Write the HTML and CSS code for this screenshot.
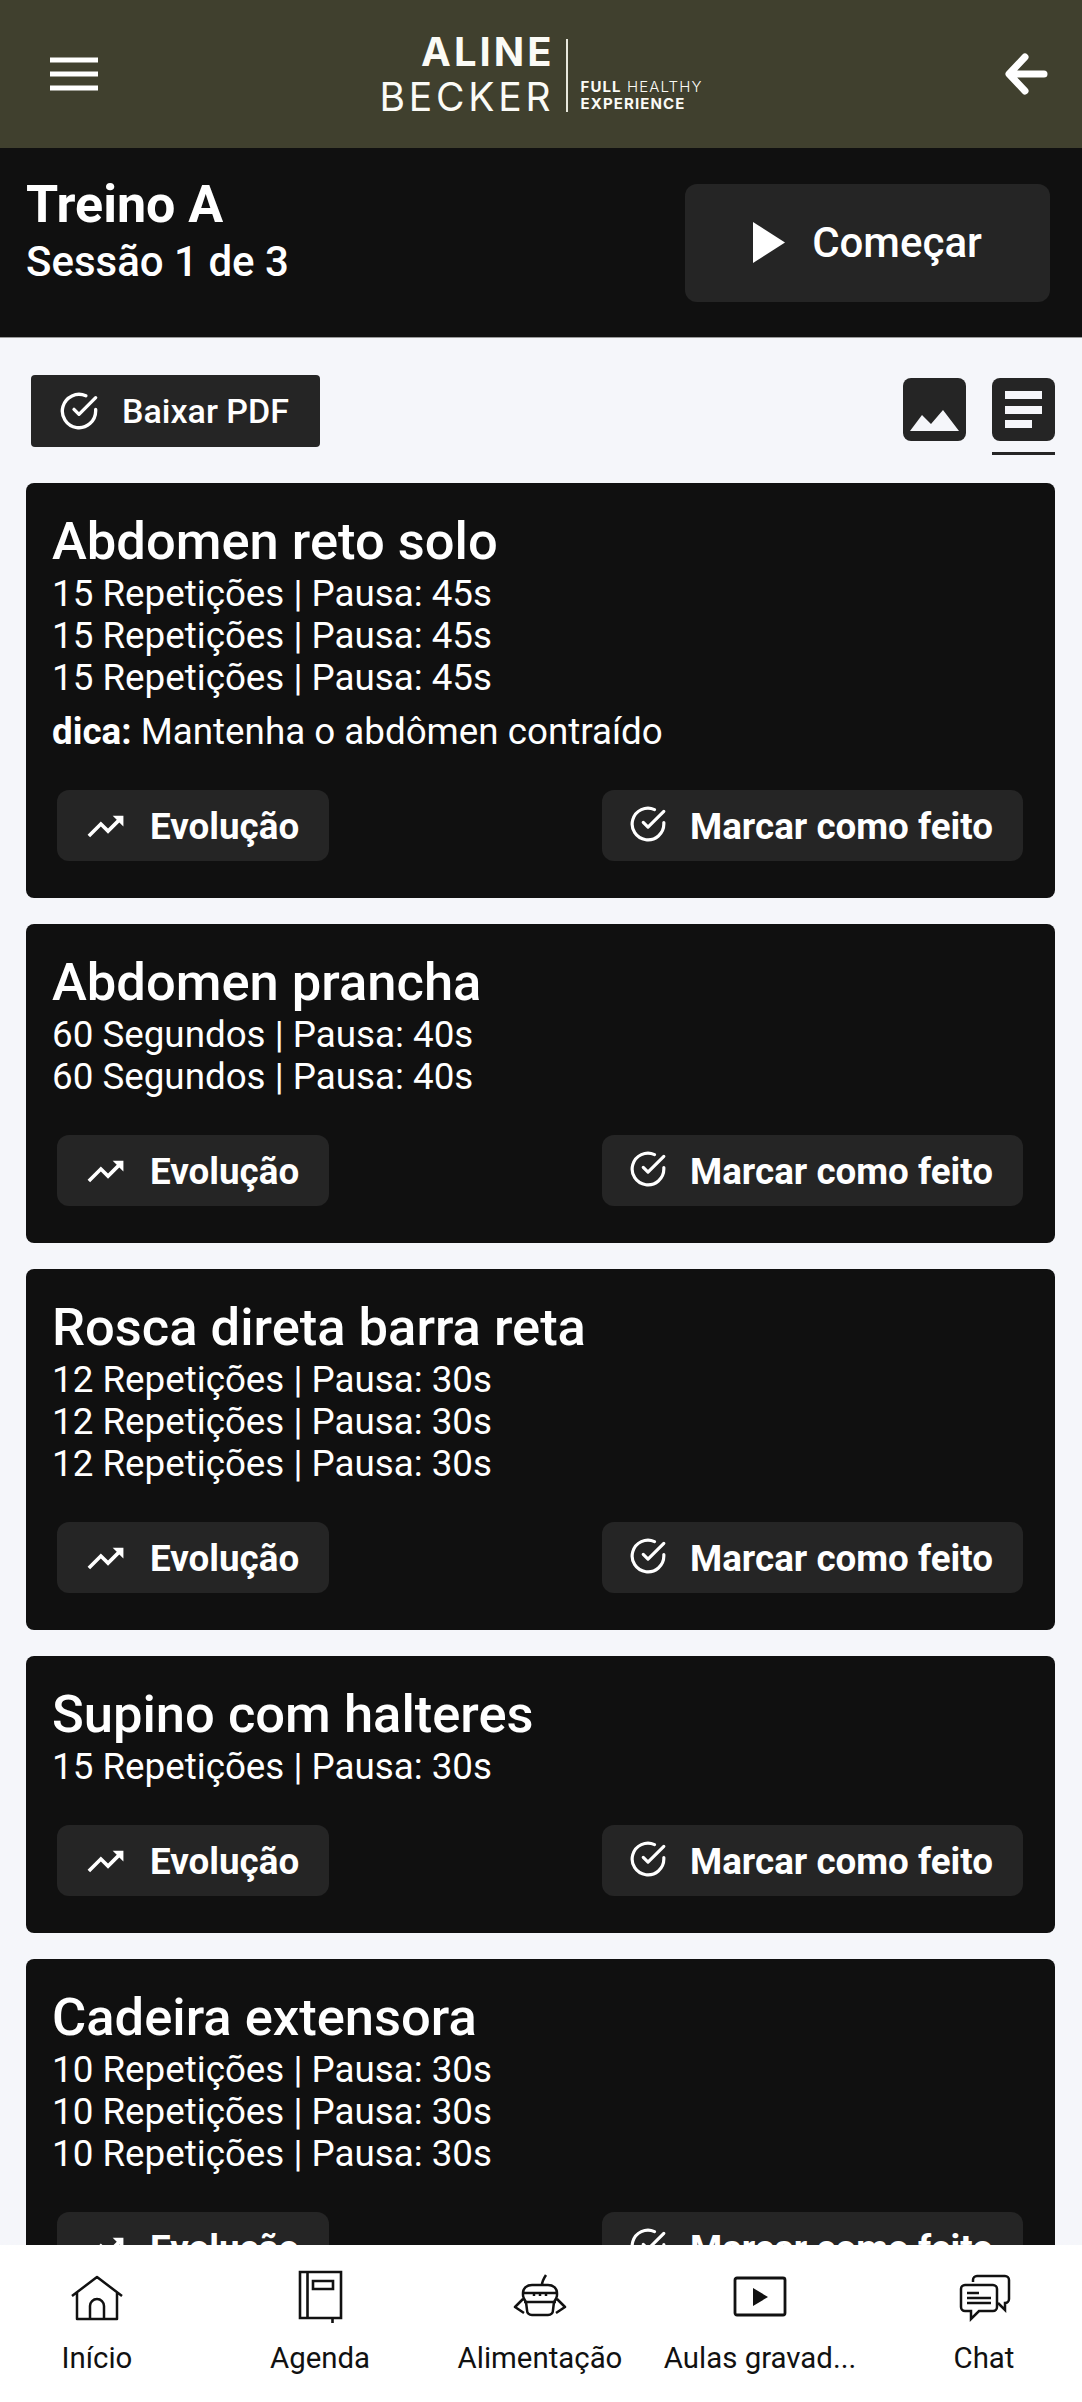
FILE: index.html
```html
<!DOCTYPE html>
<html lang="pt">
<head>
<meta charset="utf-8">
<title>Treino A</title>
<link rel="stylesheet" href="styles.css">
</head>
<body>
<svg class="defs" width="0" height="0">
  <symbol id="check" viewBox="0 0 24 24"><path d="M22 11.1V12a10 10 0 1 1-5.9-9.1" fill="none" stroke="currentColor" stroke-width="2" stroke-linecap="round"/><path d="M22 4 12 14.010l-3-3" fill="none" stroke="currentColor" stroke-width="2" stroke-linecap="round" stroke-linejoin="round"/></symbol>
  <symbol id="trend" viewBox="0 0 24 24"><path d="M16 6l2.290 2.290-4.880 4.880-4-4L2 16.590 3.410 18l6-6 4 4 6.300-6.290L22 12V6z" fill="currentColor"/></symbol>
</svg>
<div class="app">
  <header class="topbar">
    <svg class="menu" viewBox="0 0 48 34"><path d="M0 3h48M0 17h48M0 31h48" stroke="#fff" stroke-width="5"/></svg>
    <div class="logo">
      <div class="logo-name"><span class="logo-aline">ALINE</span><span class="logo-becker">BECKER</span></div>
      <div class="logo-rule"></div>
      <div class="logo-tag"><span><b>FULL</b> HEALTHY</span><b>EXPERIENCE</b></div>
    </div>
    <svg class="back" viewBox="0 0 44 42"><path d="M21 4 5 21l16 17M7 21h33" fill="none" stroke="#fff" stroke-width="7" stroke-linecap="round" stroke-linejoin="round"/></svg>
  </header>
  <section class="session">
    <div class="session-text">
      <h1 class="session-title">Treino A</h1>
      <p class="session-sub">Sessão 1 de 3</p>
    </div>
    <button class="start"><svg class="play" viewBox="0 0 32 41"><path d="M0 0l32 20.500L0 41z" fill="#fff"/></svg>Começar</button>
  </section>
  <main class="content">
    <div class="tools">
      <button class="pdf"><svg class="ic-check pdf-ic"><use href="#check"/></svg>Baixar PDF</button>
      <div class="views">
        <div class="view">
          <svg class="view-ic" viewBox="0 0 63 63"><rect width="63" height="63" rx="8" fill="#252525"/><path d="M7 53 19 37l9 9 12-14 16 21z" fill="#f5f6fa"/></svg>
        </div>
        <div class="view active">
          <svg class="view-ic" viewBox="0 0 63 63"><rect width="63" height="63" rx="8" fill="#252525"/><path d="M13 13h37v8H13zM13 28h37v8H13zM13 42h27v8H13z" fill="#f5f6fa"/></svg>
        </div>
      </div>
    </div>

    <article class="card">
      <h2>Abdomen reto solo</h2>
      <p>15 Repetições | Pausa: 45s</p>
      <p>15 Repetições | Pausa: 45s</p>
      <p>15 Repetições | Pausa: 45s</p>
      <p class="tip"><b>dica:</b> Mantenha o abdômen contraído</p>
      <div class="actions">
        <button class="act"><svg class="ic-trend"><use href="#trend"/></svg>Evolução</button>
        <button class="act"><svg class="ic-check big"><use href="#check"/></svg>Marcar como feito</button>
      </div>
    </article>

    <article class="card">
      <h2>Abdomen prancha</h2>
      <p>60 Segundos | Pausa: 40s</p>
      <p>60 Segundos | Pausa: 40s</p>
      <div class="actions">
        <button class="act"><svg class="ic-trend"><use href="#trend"/></svg>Evolução</button>
        <button class="act"><svg class="ic-check big"><use href="#check"/></svg>Marcar como feito</button>
      </div>
    </article>

    <article class="card">
      <h2>Rosca direta barra reta</h2>
      <p>12 Repetições | Pausa: 30s</p>
      <p>12 Repetições | Pausa: 30s</p>
      <p>12 Repetições | Pausa: 30s</p>
      <div class="actions">
        <button class="act"><svg class="ic-trend"><use href="#trend"/></svg>Evolução</button>
        <button class="act"><svg class="ic-check big"><use href="#check"/></svg>Marcar como feito</button>
      </div>
    </article>

    <article class="card">
      <h2>Supino com halteres</h2>
      <p>15 Repetições | Pausa: 30s</p>
      <div class="actions">
        <button class="act"><svg class="ic-trend"><use href="#trend"/></svg>Evolução</button>
        <button class="act"><svg class="ic-check big"><use href="#check"/></svg>Marcar como feito</button>
      </div>
    </article>

    <article class="card">
      <h2>Cadeira extensora</h2>
      <p>10 Repetições | Pausa: 30s</p>
      <p>10 Repetições | Pausa: 30s</p>
      <p>10 Repetições | Pausa: 30s</p>
      <div class="actions">
        <button class="act"><svg class="ic-trend"><use href="#trend"/></svg>Evolução</button>
        <button class="act"><svg class="ic-check big"><use href="#check"/></svg>Marcar como feito</button>
      </div>
    </article>
  </main>
  <nav class="tabs">
    <div class="tab">
      <svg class="tab-ic" viewBox="0 0 56 56"><path d="M3 27 28 8l25 19M8 23v27h40V23M21 50V37a7 7 0 0 1 14 0v13" fill="none" stroke="#111" stroke-width="2.500" stroke-linejoin="round"/></svg>
      <span>Início</span>
    </div>
    <div class="tab">
      <svg class="tab-ic" viewBox="0 0 56 56"><path d="M8 3h41v46H8zM15.500 3v46M21 12h20v8H21zM40.500 49v5" fill="none" stroke="#111" stroke-width="2.600"/></svg>
      <span>Agenda</span>
    </div>
    <div class="tab">
      <svg class="tab-ic" viewBox="0 0 56 56"><path d="M11 24c0-5 4-8 9-8h16c5 0 9 3 9 8v2c0 2-1 4-3 7l-1 8c0 3-2 5-5 5H20c-3 0-5-2-5-5l-1-8c-2-3-3-5-3-7zM11 24h34M12 33h32M22 24v3M28 24v3M34 24v3M30 16c0-4 2-7 4-10M11 30l-8 8 9 6M45 30l8 8-9 6" fill="none" stroke="#111" stroke-width="2.500" stroke-linejoin="round"/></svg>
      <span>Alimentação</span>
    </div>
    <div class="tab">
      <svg class="tab-ic" viewBox="0 0 56 56"><rect x="3" y="9" width="50" height="37" rx="2" fill="none" stroke="#111" stroke-width="2.800"/><path d="M21 19l15 9-15 9z" fill="#111"/></svg>
      <span>Aulas gravad...</span>
    </div>
    <div class="tab">
      <svg class="tab-ic" viewBox="0 0 56 56"><path d="M17 13v-2a4 4 0 0 1 4-4h28a4 4 0 0 1 4 4v19a4 4 0 0 1-4 4v7l-7-7" fill="none" stroke="#111" stroke-width="2.500"/><path d="M9 16h28a4 4 0 0 1 4 4v18a4 4 0 0 1-4 4H23l-8 8v-8H9a4 4 0 0 1-4-4V20a4 4 0 0 1 4-4z" fill="#fff" stroke="#111" stroke-width="2.500"/><path d="M11 24h12M11 29h24M11 34h24" stroke="#111" stroke-width="2.500"/></svg>
      <span>Chat</span>
    </div>
  </nav>
</div>
</body>
</html>
```
FILE: styles.css
```css
* { box-sizing: border-box; }
html, body { margin: 0; padding: 0; }
body { font-family: Roboto, "Noto Sans", sans-serif; background: #f5f6fa; }
p, h1, h2 { margin: 0; }
button { font-family: inherit; border: 0; color: #fff; cursor: pointer; }
.defs { display: block; height: 0; }
.app { position: relative; width: 1082px; height: 2402px; overflow: hidden; background: #f5f6fa; }

.topbar { height: 148px; background: #40402e; display: grid; grid-template-columns: 1fr auto 1fr; align-items: center; padding: 0 34px 0 50px; }
.menu { width: 48px; height: 34px; }
.back { width: 44px; height: 42px; justify-self: end; }
.logo { display: flex; align-items: flex-end; color: #fbfbf6; font-family: Inter, "Open Sans", sans-serif; margin-left: -16px; }
.logo-name { display: flex; flex-direction: column; align-items: flex-end; }
.logo-aline { font-size: 40px; font-weight: 700; line-height: 45px; letter-spacing: 3px; margin-right: -3px; }
.logo-becker { font-size: 39px; font-weight: 400; line-height: 45px; letter-spacing: 3.800px; margin-right: -3px; }
.logo-rule { width: 2px; height: 73px; background: #e8e8dd; margin: 0 13px 7px 14px; }
.logo-tag { display: flex; flex-direction: column; font-size: 15px; line-height: 17px; letter-spacing: 1.100px; margin-bottom: 7px; font-weight: 300; }
.logo-tag b { font-weight: 700; }

.session { height: 190px; background: #101010; border-bottom: 1px solid #9a9a9a; display: flex; align-items: center; justify-content: space-between; padding: 0 32px 0 26px; }
.session-text { padding-bottom: 20px; }
.session-title { font-size: 52px; font-weight: 700; line-height: 57px; color: #fff; }
.session-sub { font-size: 42px; font-weight: 500; line-height: 57px; color: #fff; }
.start { width: 365px; height: 118px; background: #252525; border-radius: 12px; font-size: 42px; font-weight: 500; display: flex; align-items: center; justify-content: center; gap: 27px; }
.play { width: 32px; height: 41px; }

.content { padding: 37px 27px 0 26px; }
.tools { display: flex; justify-content: space-between; align-items: flex-start; padding-left: 5px; height: 108px; }
.pdf { width: 289px; height: 72px; background: #252525; border-radius: 4px; font-size: 34px; font-weight: 500; display: flex; align-items: center; padding: 0 0 0 28px; gap: 23px; }
.views { display: flex; gap: 26px; padding-top: 3px; }
.view { width: 63px; height: 77px; }
.view.active { border-bottom: 3px solid #252525; }
.view-ic { display: block; width: 63px; height: 63px; }
.ic-check { width: 38px; height: 38px; }
.pdf-ic { width: 40px; height: 40px; }
.ic-check.big { margin-top: -6px; }
.ic-trend { width: 43px; height: 43px; }

.card { background: #101010; border-radius: 8px; padding: 26px 32px 37px 26px; margin-bottom: 26px; color: #fff; }
.card h2 { font-size: 52.500px; font-weight: 500; line-height: 64px; }
.card p { font-size: 36.750px; font-weight: 400; line-height: 42px; }
.card p.tip { margin-top: 12px; line-height: 42px; }
.card p.tip b { font-weight: 700; }
.actions { display: flex; justify-content: space-between; margin-top: 37px; padding-left: 5px; }
.act { height: 71px; background: #252525; border-radius: 12px; font-size: 36.750px; font-weight: 700; display: flex; align-items: center; padding: 2px 30px 0 27px; gap: 23px; }

.tabs { position: absolute; left: -14px; bottom: 0; width: 1110px; height: 157px; background: #fff; display: grid; grid-template-columns: 222px 224px 216px 224px 224px; }
.tab { min-width: 0; display: flex; flex-direction: column; align-items: center; padding-top: 24px; color: #111; font-size: 29.400px; line-height: 36px; }
.tab span { margin-top: 15px; white-space: nowrap; }
.tab-ic { width: 56px; height: 56px; }
```
